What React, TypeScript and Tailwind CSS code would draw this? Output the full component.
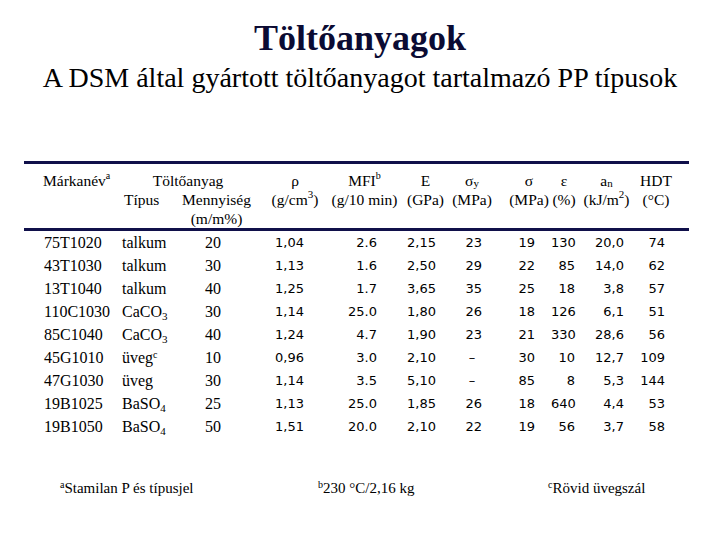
import React from "react";

const serif = "font-['Liberation_Serif','Times_New_Roman',serif]";
const sans = "font-['DejaVu_Sans','Verdana',sans-serif]";
const cols =
  "grid grid-cols-[94px_57px_83px_74px_65px_57px_36px_17px_44px_26px_59px_40px_13px]";

type Row = {
  name: string;
  type: React.ReactNode;
  vals: string[];
};

const CaCO3 = (
  <>
    CaCO<sub className="text-[11px]">3</sub>
  </>
);
const BaSO4 = (
  <>
    BaSO<sub className="text-[11px]">4</sub>
  </>
);

const rows: Row[] = [
  { name: "75T1020", type: "talkum", vals: ["20", "1,04", "2.6", "2,15", "23", "19", "130", "20,0", "74"] },
  { name: "43T1030", type: "talkum", vals: ["30", "1,13", "1.6", "2,50", "29", "22", "85", "14,0", "62"] },
  { name: "13T1040", type: "talkum", vals: ["40", "1,25", "1.7", "3,65", "35", "25", "18", "3,8", "57"] },
  { name: "110C1030", type: CaCO3, vals: ["30", "1,14", "25.0", "1,80", "26", "18", "126", "6,1", "51"] },
  { name: "85C1040", type: CaCO3, vals: ["40", "1,24", "4.7", "1,90", "23", "21", "330", "28,6", "56"] },
  {
    name: "45G1010",
    type: (
      <>
        üveg<sup className="text-[10px]">c</sup>
      </>
    ),
    vals: ["10", "0,96", "3.0", "2,10", "–", "30", "10", "12,7", "109"],
  },
  { name: "47G1030", type: "üveg", vals: ["30", "1,14", "3.5", "5,10", "–", "85", "8", "5,3", "144"] },
  { name: "19B1025", type: BaSO4, vals: ["25", "1,13", "25.0", "1,85", "26", "18", "640", "4,4", "53"] },
  { name: "19B1050", type: BaSO4, vals: ["50", "1,51", "20.0", "2,10", "22", "19", "56", "3,7", "58"] },
];

function HeadCell({ className = "", children }: { className?: string; children: React.ReactNode }) {
  return <div className={`flex justify-center items-center whitespace-nowrap ${className}`}>{children}</div>;
}

function DataRow({ row }: { row: Row }) {
  const [qty, rho, mfi, e, sy, s, eps, an, hdt] = row.vals;
  return (
    <div className={`${cols} h-[23px] items-center whitespace-nowrap`}>
      <div className={`${serif} text-[16px] pl-[20px]`}>{row.name}</div>
      <div className={`${serif} text-[16px] pl-[4px]`}>{row.type}</div>
      <div className={`${serif} text-[16px] text-right pr-[37px]`}>{qty}</div>
      <div className={`${sans} text-[13px] pl-[17px]`}>{rho}</div>
      <div className={`${sans} text-[13px] text-right pr-[20px]`}>{mfi}</div>
      <div className={`${sans} text-[13px] pl-[10px]`}>{e}</div>
      {sy === "–" ? (
        <div className={`${sans} text-[13px] text-center`}>{sy}</div>
      ) : (
        <div className={`${sans} text-[13px] text-right pr-[8px]`}>{sy}</div>
      )}
      <div />
      <div className={`${sans} text-[13px] text-right pr-[16px]`}>{s}</div>
      <div className={`${sans} text-[13px] text-right pr-[2px]`}>{eps}</div>
      <div className={`${sans} text-[13px] text-right pr-[12px]`}>{an}</div>
      <div className={`${sans} text-[13px] text-right pr-[11px]`}>{hdt}</div>
      <div />
    </div>
  );
}

export default function App() {
  return (
    <div className="w-[720px] h-[540px] bg-white text-black overflow-hidden">
      {/* Title */}
      <div className="pt-[20px] flex flex-col items-center">
        <h1 className={`${serif} text-[36px] leading-[36px] font-bold text-[#0b0b33]`}>Töltőanyagok</h1>
        <p className={`${serif} text-[28px] leading-[28px] mt-[8px]`}>
          A DSM által gyártott töltőanyagot tartalmazó PP típusok
        </p>
      </div>

      {/* Table */}
      <div className="ml-[24px] w-[665px] mt-[69px]">
        <div
          className={`${cols} grid-rows-[19px_19px_19px] pt-[7px] border-t-[3px] border-b-[3px] border-[#10104a] ${serif} text-[15.5px]`}
        >
          <div className="col-start-1 row-start-1 pl-[19px] flex items-center whitespace-nowrap">
            Márkanév<sup className="text-[10px]">a</sup>
          </div>
          <HeadCell className="col-start-2 col-span-2 row-start-1">Töltőanyag</HeadCell>
          <div className="col-start-2 row-start-2 pl-[6px] flex items-center">Típus</div>
          <HeadCell className="col-start-3 row-start-2">Mennyiség</HeadCell>
          <HeadCell className="col-start-3 row-start-3">(m/m%)</HeadCell>

          <HeadCell className="col-start-4 row-start-1">ρ</HeadCell>
          <HeadCell className="col-start-4 row-start-2">
            (g/cm<sup className="text-[11px]">3</sup>)
          </HeadCell>
          <HeadCell className="col-start-5 row-start-1">
            MFI<sup className="text-[10px]">b</sup>
          </HeadCell>
          <HeadCell className="col-start-5 row-start-2">(g/10 min)</HeadCell>
          <HeadCell className="col-start-6 row-start-1">E</HeadCell>
          <HeadCell className="col-start-6 row-start-2">(GPa)</HeadCell>
          <HeadCell className="col-start-7 row-start-1">
            σ<sub className="text-[11px]">y</sub>
          </HeadCell>
          <HeadCell className="col-start-7 row-start-2">(MPa)</HeadCell>

          <HeadCell className="col-start-9 row-start-1">σ</HeadCell>
          <HeadCell className="col-start-9 row-start-2">(MPa)</HeadCell>
          <HeadCell className="col-start-10 row-start-1">ε</HeadCell>
          <HeadCell className="col-start-10 row-start-2">(%)</HeadCell>
          <HeadCell className="col-start-11 row-start-1">
            a<sub className="text-[11px]">n</sub>
          </HeadCell>
          <HeadCell className="col-start-11 row-start-2">
            (kJ/m<sup className="text-[11px]">2</sup>)
          </HeadCell>
          <HeadCell className="col-start-12 row-start-1">HDT</HeadCell>
          <HeadCell className="col-start-12 row-start-2">(°C)</HeadCell>
        </div>

        {rows.map((r) => (
          <DataRow key={r.name} row={r} />
        ))}
      </div>

      {/* Footnotes */}
      <div className={`${serif} text-[15px] grid grid-cols-[258px_230px_1fr] pl-[60px] mt-[39px] whitespace-nowrap`}>
        <div>
          <sup className="text-[10px]">a</sup>Stamilan P és típusjel
        </div>
        <div>
          <sup className="text-[10px]">b</sup>230 °C/2,16 kg
        </div>
        <div>
          <sup className="text-[10px]">c</sup>Rövid üvegszál
        </div>
      </div>
    </div>
  );
}
